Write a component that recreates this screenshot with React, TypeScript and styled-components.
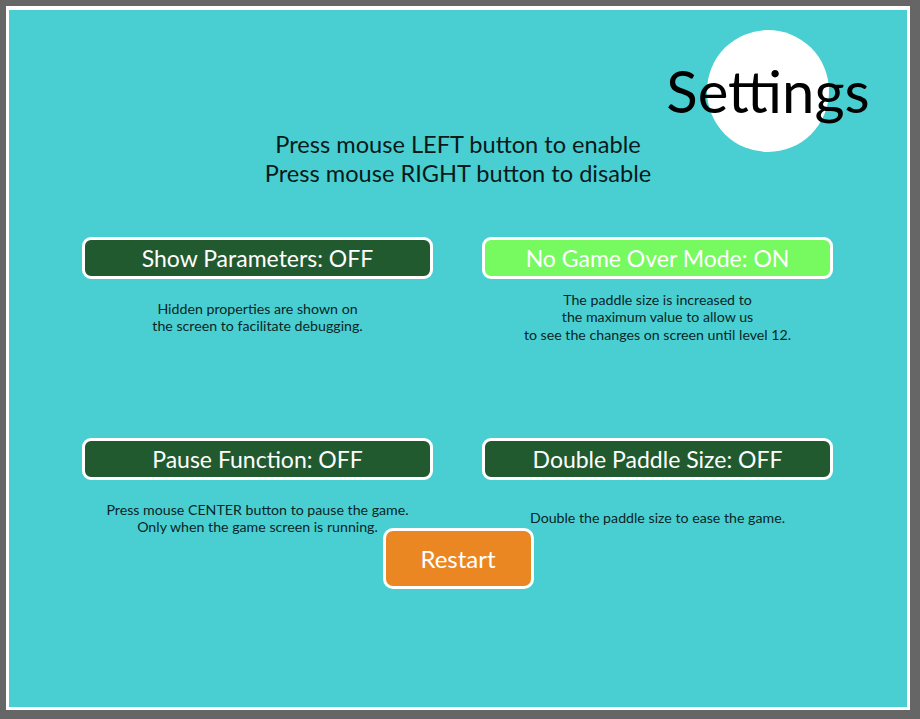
import styled, { createGlobalStyle } from "styled-components";

const GlobalStyle = createGlobalStyle`
  html, body {
    margin: 0;
    padding: 0;
    background: #666666;
    height: 719px;
    overflow: hidden;
  }
  body {
    font-family: "Lato", "Noto Sans", sans-serif;
  }
`;

const toggles = [
  {
    label: "Show Parameters: OFF",
    on: false,
    desc: ["Hidden properties are shown on", "the screen to facilitate debugging."],
  },
  {
    label: "No Game Over Mode: ON",
    on: true,
    desc: [
      "The paddle size is increased to",
      "the maximum value to allow us",
      "to see the changes on screen until level 12.",
    ],
  },
  {
    label: "Pause Function: OFF",
    on: false,
    desc: [
      "Press mouse CENTER button to pause the game.",
      "Only when the game screen is running.",
    ],
  },
  {
    label: "Double Paddle Size: OFF",
    on: false,
    desc: ["Double the paddle size to ease the game."],
  },
];

const App = () => {
  return (
    <>
      <GlobalStyle />
      <Screen>
        <Title>Settings</Title>
        <Instructions>
          Press mouse LEFT button to enable
          <br />
          Press mouse RIGHT button to disable
        </Instructions>
        <OptionGrid>
          {toggles.map((t) => (
            <Option key={t.label}>
              <ToggleButton $on={t.on}>{t.label}</ToggleButton>
              <Description>
                {t.desc.map((line) => (
                  <span key={line}>{line}</span>
                ))}
              </Description>
            </Option>
          ))}
        </OptionGrid>
        <RestartButton>Restart</RestartButton>
      </Screen>
    </>
  );
};

const Screen = styled.div`
  position: relative;
  box-sizing: border-box;
  width: 904px;
  height: 704px;
  margin: 6px 0 0 6px;
  border: 3px solid #ffffff;
  border-top-width: 4px;
  background: #49cfd2;
  display: flex;
  flex-direction: column;
  align-items: center;
  padding-top: 120px;
`;

const Title = styled.h1`
  position: absolute;
  top: 20px;
  left: 698px;
  width: 122px;
  height: 122px;
  margin: 0;
  border-radius: 50%;
  background: #ffffff;
  display: flex;
  align-items: center;
  justify-content: center;
  white-space: nowrap;
  font-size: 58px;
  font-weight: 400;
  line-height: 1;
  color: #000000;
`;

const Instructions = styled.p`
  margin: 0;
  font-size: 23.6px;
  line-height: 29px;
  text-align: center;
  color: #0a1a1a;
`;

const OptionGrid = styled.div`
  align-self: flex-start;
  margin-left: 73px;
  display: grid;
  grid-template-columns: 351px 351px;
  column-gap: 49px;
  row-gap: 96px;
  margin-top: 49px;
`;

const Option = styled.div`
  display: flex;
  flex-direction: column;
`;

const ToggleButton = styled.button<{ $on: boolean }>`
  box-sizing: border-box;
  height: 42px;
  border: 3px solid #ffffff;
  border-radius: 9px;
  background: ${(p) => (p.$on ? "#76fa5f" : "#225a30")};
  color: #ffffff;
  font-family: "Lato", "Noto Sans", sans-serif;
  font-size: 23px;
  display: flex;
  align-items: center;
  justify-content: center;
  padding: 0;
`;

const Description = styled.div`
  margin-top: 13px;
  height: 50px;
  display: flex;
  flex-direction: column;
  justify-content: center;
  align-items: center;
  font-size: 14.2px;
  line-height: 17.5px;
  color: #0a2626;
  text-align: center;
`;

const RestartButton = styled.button`
  box-sizing: border-box;
  width: 151px;
  height: 61px;
  margin-top: -15px;
  border: 3px solid #ffffff;
  border-radius: 10px;
  background: #eb8723;
  color: #ffffff;
  font-family: "Lato", "Noto Sans", sans-serif;
  font-size: 24px;
  padding: 0;
`;

export default App;
